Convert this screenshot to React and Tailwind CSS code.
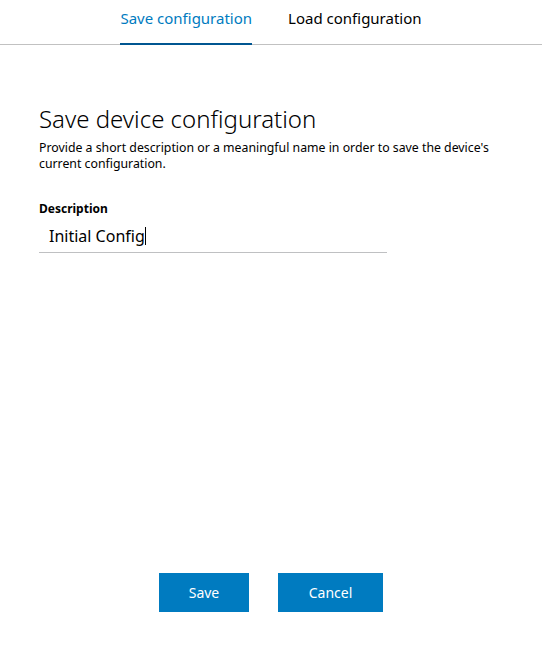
export default function App() {
  return (
    <div className="w-[542px] h-[658px] bg-white flex flex-col text-black" style={{ fontFamily: '"Noto Sans", "Open Sans", sans-serif' }}>
      <div className="h-[45px] border-b border-[#c1c1c1] flex justify-center gap-[36px]">
        <div className="relative h-full flex items-center text-[15px] text-[#007bc0] pb-[7px]">
          Save configuration
          <div className="absolute left-0 right-0 bottom-[-1px] h-[2px] bg-[#005691]" />
        </div>
        <div className="h-full flex items-center text-[15px] text-black pb-[7px]">Load configuration</div>
      </div>
      <div className="pl-[39px] pt-[58px] flex flex-col">
        <h1 className="text-[24px] leading-[32px] font-light">Save device configuration</h1>
        <p className="text-[12.3px] leading-[16px] w-[470px] mt-[5px]">
          Provide a short description or a meaningful name in order to save the device's current configuration.
        </p>
        <label className="text-[12px] font-bold mt-[29px] leading-[16px]">Description</label>
        <div className="w-[348px] border-b border-[#bfc0c2] mt-[3px] h-[33px] flex items-center pl-[10px] pb-[1px]">
          <span className="text-[16px]">Initial Config</span>
          <span className="w-px h-[18px] bg-black" />
        </div>
      </div>
      <div className="flex-1" />
      <div className="flex justify-center gap-[29px] mb-[46px]">
        <button className="w-[90px] h-[39px] bg-[#007bc0] text-white text-[14px]">Save</button>
        <button className="w-[105px] h-[39px] bg-[#007bc0] text-white text-[14px]">Cancel</button>
      </div>
    </div>
  );
}
